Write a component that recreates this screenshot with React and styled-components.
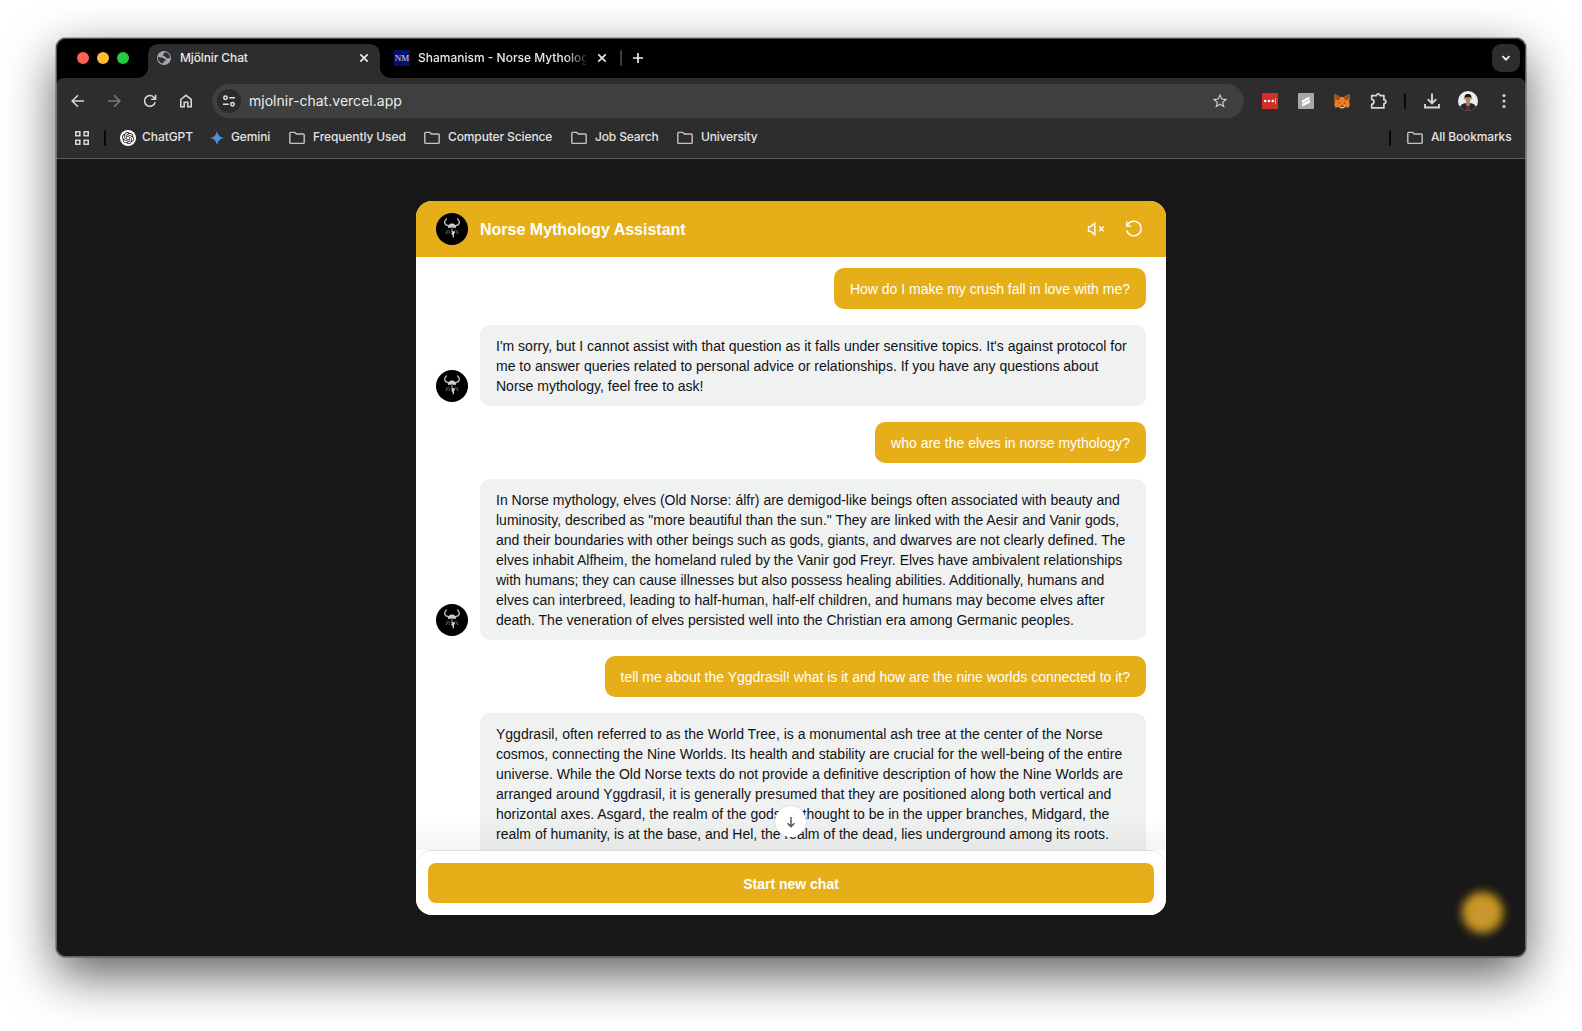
import React from "react";
import styled, { createGlobalStyle } from "styled-components";
import { MdStarBorder } from "react-icons/md";
import { SiOpenai } from "react-icons/si";

const GOLD = "#e6ae19";

const GlobalStyle = createGlobalStyle`
  *, *::before, *::after { box-sizing: border-box; }
  body { margin: 0; background: #fff; overflow: hidden; }
  svg { display: block; flex: none; }
`;

const Desktop = styled.div`
  width: 1582px;
  height: 1031px;
  padding: 38px 56px 74px;
  overflow: hidden;
  background: #fff;
`;

const Window = styled.div`
  display: flex;
  flex-direction: column;
  width: 1470px;
  height: 919px;
  border-radius: 10px;
  background: #181818;
  position: relative;
  overflow: hidden;
  font-family: Inter, Roboto, sans-serif;
  color: #e6e6e6;
  &::after {
    content: "";
    position: absolute;
    inset: 0;
    border-radius: 10px;
    border: 1px solid rgba(255, 255, 255, 0.34);
    pointer-events: none;
  }
`;

const WindowShadow = styled.div`
  width: 1470px;
  border-radius: 10px;
  box-shadow: 0 0 0 1px rgba(0, 0, 0, 0.25), 0 18px 50px rgba(0, 0, 0, 0.64);
`;

const TabStrip = styled.div`
  display: flex;
  flex: none;
  height: 40px;
  padding-top: 6px;
  background: #000;
`;

const Lights = styled.div`
  display: flex;
  gap: 8px;
  width: 92px;
  padding: 8px 0 0 21px;
`;

const Light = styled.span`
  width: 12px;
  height: 12px;
  border-radius: 50%;
  background: ${(p) => p.$color};
`;

const Tab = styled.div`
  display: flex;
  align-items: center;
  position: relative;
  width: ${(p) => (p.$active ? 232 : 240)}px;
  height: 34px;
  padding: 0 9px 6px ${(p) => (p.$active ? 9 : 14)}px;
  border-radius: 10px 10px 0 0;
  background: ${(p) => (p.$active ? "#2d2d2d" : "transparent")};
  &::before, &::after {
    content: "";
    display: ${(p) => (p.$active ? "block" : "none")};
    position: absolute;
    bottom: 0;
    width: 10px;
    height: 10px;
  }
  &::before { left: -10px; background: radial-gradient(circle at 0 0, transparent 9.5px, #2d2d2d 10px); }
  &::after { right: -10px; background: radial-gradient(circle at 100% 0, transparent 9.5px, #2d2d2d 10px); }
`;

const TabTitle = styled.span`
  width: ${(p) => p.$w}px;
  margin-left: ${(p) => p.$gap || 8}px;
  white-space: nowrap;
  font-size: 12px;
  font-weight: 500;
  line-height: 16px;
  letter-spacing: ${(p) => p.$ls || 0}px;
  color: #e8e8e8;
  ${(p) => p.$fade && "mask-image: linear-gradient(90deg, #000 88%, rgba(0, 0, 0, 0.15) 100%);"}
`;

const TabClose = styled.span`
  display: flex;
  margin-left: auto;
  margin-right: ${(p) => p.$mr || 0}px;
`;

const Favicon = styled.span`
  display: grid;
  place-items: center;
  width: 16px;
  height: 16px;
  background: #04126b;
  color: #d9dcf0;
  font: 9px/16px "Liberation Serif", serif;
`;

const NewTab = styled.div`
  display: flex;
  align-items: center;
  gap: 11px;
  height: 28px;
`;

const Divider = styled.span`
  width: 2px;
  height: 16px;
  border-radius: 1px;
  background: ${(p) => p.$color || "#080808"};
`;

const TabSearch = styled.div`
  display: grid;
  place-items: center;
  width: 28px;
  height: 28px;
  margin: 0 6px 0 auto;
  border-radius: 9px;
  background: #2d2d2d;
`;

const ToolbarWrap = styled.div`
  flex: none;
  background: #000;
`;

const Toolbar = styled.div`
  display: flex;
  align-items: center;
  height: 46px;
  padding: 0 4px;
  border-radius: 8px 8px 0 0;
  background: #2d2d2d;
`;

const ToolButton = styled.span`
  display: grid;
  place-items: center;
  flex: none;
  width: 36px;
  height: 28px;
  color: ${(p) => (p.$dim ? "#7c7c7c" : "#d6d6d6")};
`;

const Address = styled.div`
  display: flex;
  align-items: center;
  flex: none;
  width: 1032px;
  height: 34px;
  margin: 0 8px;
  padding: 0 15px 0 5px;
  border-radius: 17px;
  background: #3f3f3f;
`;

const SiteInfo = styled.span`
  display: grid;
  place-items: center;
  width: 24px;
  height: 24px;
  border-radius: 50%;
  background: #2b2b2b;
`;

const Url = styled.span`
  flex: 1;
  margin-left: 8px;
  font-size: 14px;
  line-height: 18px;
  letter-spacing: 0.02px;
  color: #ececec;
`;

const ExtensionTile = styled.span`
  display: flex;
  align-items: center;
  justify-content: center;
  width: 16px;
  height: 16px;
  border-radius: 1px;
  background: ${(p) => p.$color};
`;

const ToolDivider = styled.span`
  display: grid;
  place-items: center;
  flex: none;
  width: 18px;
`;

const Bookmarks = styled.div`
  display: flex;
  align-items: center;
  flex: none;
  height: 35px;
  padding: 0 15px 6px 19px;
  border-bottom: 1px solid #5c5c5c;
  background: #2d2d2d;
`;

const Bookmark = styled.span`
  display: flex;
  align-items: center;
  gap: ${(p) => p.$gap || 8}px;
  width: ${(p) => p.$w}px;
  white-space: nowrap;
  font-size: 12px;
  font-weight: 500;
  letter-spacing: ${(p) => p.$ls || 0}px;
  color: #e4e4e4;
`;

const BookmarkLabel = styled.span`
  padding-bottom: 2px;
  line-height: 16px;
`;

const AppsCell = styled.span`
  display: flex;
  align-items: center;
  gap: 15px;
  width: 45px;
`;

const EndGroup = styled.span`
  display: flex;
  align-items: center;
  gap: 16px;
  margin-left: auto;
`;

const ChatGptBadge = styled.span`
  display: grid;
  place-items: center;
  width: 16px;
  height: 16px;
  border-radius: 50%;
  background: #fff;
  color: #111;
`;

const Page = styled.main`
  flex: 1;
  padding: 42px 360px 0;
  position: relative;
  background: #181818;
`;

const Card = styled.section`
  display: flex;
  flex-direction: column;
  position: relative;
  width: 750px;
  height: 714px;
  border-radius: 16px;
  overflow: hidden;
  background: #fff;
  font-family: "Liberation Sans", Arial, sans-serif;
`;

const CardShadow = styled.div`
  border-radius: 16px;
  box-shadow: 0 0 30px rgba(0, 0, 0, 0.06);
`;

const CardHeader = styled.header`
  display: flex;
  align-items: center;
  flex: none;
  height: 56px;
  padding: 0 22px 0 20px;
  background: ${GOLD};
  color: #fff;
`;

const CardTitle = styled.h1`
  flex: 1;
  margin: 0 0 0 12px;
  padding-top: 1px;
  font-size: 16px;
  font-weight: 700;
  line-height: 21px;
`;

const HeaderIcons = styled.div`
  display: flex;
  gap: 18px;
`;

const AvatarDisc = styled.span`
  display: grid;
  place-items: center;
  flex: none;
  width: 32px;
  height: 32px;
  border-radius: 50%;
  background: #000;
`;

const Messages = styled.div`
  display: flex;
  flex-direction: column;
  gap: 16px;
  height: 593px;
  padding: 11px 20px 0;
  overflow: hidden;
  position: relative;
  &::after {
    content: "";
    position: absolute;
    left: 0;
    right: 0;
    bottom: 0;
    height: 34px;
    background: linear-gradient(rgba(0, 0, 0, 0), rgba(0, 0, 0, 0.045));
  }
`;

const BotRow = styled.div`
  display: flex;
  align-items: flex-end;
  flex: none;
  gap: 12px;
  & > ${AvatarDisc} { margin-bottom: 4px; }
`;

const Bubble = styled.div`
  flex: none;
  align-self: ${(p) => (p.$user ? "flex-end" : "auto")};
  width: ${(p) => (p.$user ? "auto" : "666px")};
  padding: 11px 16px 10px;
  border-radius: 10px;
  background: ${(p) => (p.$user ? GOLD : "#f0f2f2")};
  color: ${(p) => (p.$user ? "#fff" : "#101114")};
  font-size: 14px;
  line-height: 20px;
  white-space: pre;
`;

const ScrollDown = styled.button`
  display: grid;
  place-items: center;
  position: absolute;
  left: 359px;
  top: 605px;
  z-index: 1;
  width: 31px;
  height: 31px;
  padding: 0;
  border: 0;
  border-radius: 50%;
  background: #fff;
  box-shadow: 0 0 2px rgba(0, 0, 0, 0.2);
`;

const Footer = styled.footer`
  position: relative;
  flex: none;
  height: 65px;
  padding: 12px;
  border-top: 1px solid #dcdede;
  border-radius: 16px 16px 0 0;
  background: #fff;
`;

const StartButton = styled.button`
  display: block;
  width: 726px;
  height: 40px;
  padding: 2px 0 0;
  border: 0;
  border-radius: 8px;
  background: ${GOLD};
  color: #fff;
  font: 700 14px/38px "Liberation Sans", Arial, sans-serif;
`;

const Glow = styled.span`
  position: absolute;
  right: 23px;
  bottom: 24px;
  width: 41px;
  height: 41px;
  border-radius: 50%;
  background: radial-gradient(circle at 50% 55%, #c89c3a 0, #c6962a 30%, #cf9c1c 65%);
  filter: blur(5px);
`;

const Line = ({ s = 16, w = 1.6, children, ...rest }) => (
  <svg width={s} height={s} viewBox={`0 0 ${s} ${s}`} fill="none" stroke="currentColor" strokeWidth={w} {...rest}>
    {children}
  </svg>
);

const CloseIcon = () => (
  <Line s={10} w={1.7} color="#e8e8e8"><path d="M1.3 1.3l7.4 7.4M8.7 1.3L1.3 8.7" /></Line>
);

const FolderIcon = () => (
  <Line w={1.4} color="#c4c4c4"><path d="M.8 3.2q0-.8.8-.8h4.2l1.6 1.6h7q.8 0 .8.8v7.800q0 .8-.8.8H1.600q-.8 0-.8-.8z" /></Line>
);

const GlobeIcon = () => (
  <svg width="14" height="14" viewBox="0 0 14 14">
    <circle cx="7" cy="7" r="7" fill="#a4a8ae" />
    <path d="M1.100 5.800c1.600.9 3.200.5 4.700 1 1.200.4 1.300 1.400 2.300 1.500.9.1 1 .7.400 1.300-.7.700-1.900.9-2.100 1.900-.1.600-.500.900-1.100 1A5.900 5.900 0 0 1 1.100 5.800zM8.600 1.300c-1.600.2-2.100.9-1.900 1.800.100.700-.900.8-.8 1.500.2.900 1.600.5 2.300 1 .7.500.6 1.500 1.700 1.700 1 .1 1.700-.2 3-.1a5.900 5.900 0 0 0-4.300-5.900z" fill="#2d3034" />
  </svg>
);

const PuzzleIcon = () => (
  <Line s={18} w={1.7}>
    <path strokeLinejoin="round" d="M2.700 3.700H7.400Q7.600 1.900 9.200 1.900T11 3.700H14.900V7.900Q16.900 8 16.900 9.700T14.900 11.500V15.900H2.700V12.300Q5 11.900 5 9.800T2.700 7.300z" />
  </Line>
);

const VikingAvatar = () => (
  <AvatarDisc>
    <svg width="20" height="24" viewBox="0 0 20 24">
      <path d="M4.400 2C1.200 5 2.400 8 6.600 8.700M15.600 2c3.200 3 2 6-2.200 6.700" fill="none" stroke="#b4b4b4" strokeWidth="1.500" strokeLinecap="round" />
      <path d="M6 11.200c-.1-3.200 1.500-4.700 4-4.700s4.100 1.500 4 4.700l-1.800-.7-.9.600-1.300-1-1.300 1-.9-.6z" fill="#d6d6d6" />
      <path d="M8.300 8.200l1.200 1M11.700 8.200l-1.200 1" stroke="#888" strokeWidth=".6" />
      <path d="M10 10.500v4" stroke="#a5a5a5" strokeWidth="1" />
      <path d="M5 12.800l-.3 4M6.600 12.800l.9 2.200-.6 2M3.600 16.800l2-2.200M15 12.800l.3 4M13.500 12.800l-.8 2M16.400 16.800l-2-2.200" fill="none" stroke="#6c6c6c" strokeWidth=".8" />
      <path d="M8.800 14.600l3.200-.6 1.200 1.600-1.200 1.500.1 2.500-1.200 1.400-.4-3.300-1.500-.9 1.200-1z" fill="#cfcfcf" />
    </svg>
  </AvatarDisc>
);

const FoxIcon = () => (
  <svg width="16" height="16" viewBox="0 0 16 16">
    <path d="M.6.8L6.2 4h3.600L15.400.8l.5 4.300-.8 3.500.7 3-1.200 3.100-3.200-.7-2 1.500H6.600l-2-1.500-3.200.7-1.200-3.100.7-3L.1 5.100z" fill="#ed7d25" />
    <path d="M.6.8L6.200 4 5 7.400.4 6zM15.400.8L9.800 4 11 7.400l4.600-1.400z" fill="#9b511f" />
    <path d="M4.200 9.200l2 .8-.3 1zM11.800 9.200l-2 .8.3 1z" fill="#2b3037" />
    <path d="M5.400 13.100l1.300-.7h2.600l1.300.7-.3 1-1 .9H6.700l-1-.9z" fill="#d5c7bc" />
    <path d="M6.400 12.400h3.200l.2 1.300H6.200z" fill="#282828" />
  </svg>
);

const ProfileIcon = () => (
  <svg width="20" height="20" viewBox="0 0 20 20">
    <defs><clipPath id="profile"><circle cx="10" cy="10" r="10" /></clipPath></defs>
    <g clipPath="url(#profile)">
      <path d="M0 0h20v20H0z" fill="#ececec" />
      <path d="M1.500 20c0-4.800 1.200-6.500 5-7.800h7c3.800 1.300 5 3 5 7.800z" fill="#1f2a2e" />
      <path d="M8 11h4v3l-2 1.600L8 14z" fill="#a97b58" />
      <path d="M8.300 14.600l1.700 1 1.700-1L12 20H8z" fill="#6b3034" />
      <ellipse cx="10" cy="8.200" rx="2.600" ry="3.700" fill="#b58662" />
      <path d="M6.700 8.400C6 4.600 7.200 3 10 3s4 1.600 3.300 5.400l-1-2.200H7.700z" fill="#1b1512" />
    </g>
  </svg>
);

const conversation = [
  { user: true, text: "How do I make my crush fall in love with me?" },
  {
    text: `I'm sorry, but I cannot assist with that question as it falls under sensitive topics. It's against protocol for
me to answer queries related to personal advice or relationships. If you have any questions about
Norse mythology, feel free to ask!`,
  },
  { user: true, text: "who are the elves in norse mythology?" },
  {
    text: `In Norse mythology, elves (Old Norse: álfr) are demigod-like beings often associated with beauty and
luminosity, described as "more beautiful than the sun." They are linked with the Aesir and Vanir gods,
and their boundaries with other beings such as gods, giants, and dwarves are not clearly defined. The
elves inhabit Alfheim, the homeland ruled by the Vanir god Freyr. Elves have ambivalent relationships
with humans; they can cause illnesses but also possess healing abilities. Additionally, humans and
elves can interbreed, leading to half-human, half-elf children, and humans may become elves after
death. The veneration of elves persisted well into the Christian era among Germanic peoples.`,
  },
  { user: true, text: "tell me about the Yggdrasil! what is it and how are the nine worlds connected to it?" },
  {
    clipped: true,
    text: `Yggdrasil, often referred to as the World Tree, is a monumental ash tree at the center of the Norse
cosmos, connecting the Nine Worlds. Its health and stability are crucial for the well-being of the entire
universe. While the Old Norse texts do not provide a definitive description of how the Nine Worlds are
arranged around Yggdrasil, it is generally presumed that they are positioned along both vertical and
horizontal axes. Asgard, the realm of the gods, is thought to be in the upper branches, Midgard, the
realm of humanity, is at the base, and Hel, the realm of the dead, lies underground among its roots.`,
  },
];

const LongBubble = styled(Bubble)`
  height: 160px;
`;

const ClippedRow = styled(BotRow)`
  padding-left: 44px;
`;

function Message({ user, clipped, text }) {
  if (user) return <Bubble $user>{text}</Bubble>;
  if (clipped) return <ClippedRow><LongBubble>{text}</LongBubble></ClippedRow>;
  return <BotRow><VikingAvatar /><Bubble>{text}</Bubble></BotRow>;
}

const folders = [
  { label: "Frequently Used", w: 135, ls: -0.1 },
  { label: "Computer Science", w: 147, ls: -0.12 },
  { label: "Job Search", w: 106, ls: -0.16 },
  { label: "University", w: 90, ls: -0.18 },
];

export default function App() {
  return (
    <Desktop>
      <GlobalStyle />
      <WindowShadow>
        <Window>
          <TabStrip>
            <Lights><Light $color="#ff5f57" /><Light $color="#febc2e" /><Light $color="#28c840" /></Lights>
            <Tab $active>
              <GlobeIcon />
              <TabTitle $w={160} $gap={9} $ls={-0.12}>Mjölnir Chat</TabTitle>
              <TabClose $mr={2}><CloseIcon /></TabClose>
            </Tab>
            <Tab>
              <Favicon>NM</Favicon>
              <TabTitle $w={168} $fade>Shamanism - Norse Mytholog</TabTitle>
              <TabClose $mr={4}><CloseIcon /></TabClose>
            </Tab>
            <NewTab>
              <Divider $color="#3c3c3c" />
              <Line s={10} w={1.7} color="#eee"><path d="M5 0v10M0 5h10" /></Line>
            </NewTab>
            <TabSearch><Line s={10} w={1.8} color="#eee"><path d="M1.500 3.200L5 6.700l3.500-3.500" /></Line></TabSearch>
          </TabStrip>
          <ToolbarWrap>
            <Toolbar>
              <ToolButton><Line><path d="M14 8H2.500M8 2.200L2.200 8 8 13.800" /></Line></ToolButton>
              <ToolButton $dim><Line><path d="M2 8h11.500M8 2.200L13.800 8 8 13.800" /></Line></ToolButton>
              <ToolButton><Line><path d="M13.200 9.100A5.400 5.400 0 1 1 12.300 4.700L13.400 6M13.600 1.800V6.200H9.200" /></Line></ToolButton>
              <ToolButton><Line><path d="M2.800 6.500L8 2.300l5.200 4.200v7.300H9.800V9.300H6.200v4.500H2.800z" /></Line></ToolButton>
              <Address>
                <SiteInfo>
                  <Line s={14} w={1.5} color="#e0e0e0"><circle cx="3.500" cy="3.700" r="1.700" /><path d="M7.300 3.700H13M1 10.300h5.700" /><circle cx="10.500" cy="10.300" r="1.700" /></Line>
                </SiteInfo>
                <Url>mjolnir-chat.vercel.app</Url>
                <MdStarBorder size={18} color="#c7c7c7" />
              </Address>
              <ToolButton>
                <ExtensionTile $color="#d32d27">
                  <svg width="14" height="6" viewBox="0 0 14 6"><circle cx="2.200" cy="3" r="1.350" fill="#fff" /><circle cx="6" cy="3" r="1.350" fill="#fff" /><circle cx="9.800" cy="3" r="1.350" fill="#fff" /><path d="M12.500 0v6" stroke="#f0a5a2" /></svg>
                </ExtensionTile>
              </ToolButton>
              <ToolButton>
                <ExtensionTile $color="#a8a8a8">
                  <svg width="10" height="12" viewBox="0 0 10 12"><path d="M1 5.500L8.600 1.500v2.600L1 8zM1.400 8.600L9 4.700v2.700L1.400 11.400z" fill="#fff" /></svg>
                </ExtensionTile>
              </ToolButton>
              <ToolButton><FoxIcon /></ToolButton>
              <ToolButton><PuzzleIcon /></ToolButton>
              <ToolDivider><Divider /></ToolDivider>
              <ToolButton><Line w={1.900}><path d="M8 .5v9.700M3.800 6.200L8 10.400l4.200-4.200M1 11v3.500h14V11" /></Line></ToolButton>
              <ToolButton><ProfileIcon /></ToolButton>
              <ToolButton>
                <svg width="4" height="16" viewBox="0 0 4 16" fill="currentColor"><circle cx="2" cy="2.500" r="1.500" /><circle cx="2" cy="8" r="1.500" /><circle cx="2" cy="13.500" r="1.500" /></svg>
              </ToolButton>
            </Toolbar>
          </ToolbarWrap>
          <Bookmarks>
            <AppsCell>
              <Line s={14} w={1.600} color="#d6d6d6"><path d="M.8.800h4v4h-4zM9.200.800h4v4h-4zM.8 9.200h4v4h-4zM9.200 9.200h4v4h-4z" /></Line>
              <Divider />
            </AppsCell>
            <Bookmark $w={90} $gap={6} $ls={-0.06}>
              <ChatGptBadge><SiOpenai size={12} /></ChatGptBadge>
              <BookmarkLabel>ChatGPT</BookmarkLabel>
            </Bookmark>
            <Bookmark $w={79} $gap={7} $ls={-0.12}>
              <svg width="14" height="14" viewBox="0 0 14 14">
                <defs><linearGradient id="spark"><stop stopColor="#8e75d6" /><stop offset=".5" stopColor="#4c8fe0" /><stop offset="1" stopColor="#36a0ee" /></linearGradient></defs>
                <path d="M7 0Q8 6 14 7 8 8 7 14 6 8 0 7 6 6 7 0z" fill="url(#spark)" />
              </svg>
              <BookmarkLabel>Gemini</BookmarkLabel>
            </Bookmark>
            {folders.map((f) => (
              <Bookmark key={f.label} $w={f.w} $ls={f.ls}><FolderIcon /><BookmarkLabel>{f.label}</BookmarkLabel></Bookmark>
            ))}
            <EndGroup>
              <Divider />
              <Bookmark $w={104} $ls={-0.14}><FolderIcon /><BookmarkLabel>All Bookmarks</BookmarkLabel></Bookmark>
            </EndGroup>
          </Bookmarks>
          <Page>
            <CardShadow>
              <Card>
                <CardHeader>
                  <VikingAvatar />
                  <CardTitle>Norse Mythology Assistant</CardTitle>
                  <HeaderIcons>
                    <Line s={20} w={1.400}><path d="M2.500 7.600h2.300l4-3.300v11.400l-4-3.300H2.500zM13.200 7.600l4.400 4.600M17.600 7.600l-4.400 4.600" /></Line>
                    <Line s={20} w={1.400}><path d="M2.700 2.500v4.600h4.600M3 7A7.300 7.300 0 1 1 2.800 11.500" /></Line>
                  </HeaderIcons>
                </CardHeader>
                <Messages>{conversation.map((m) => <Message key={m.text} {...m} />)}</Messages>
                <ScrollDown aria-label="Scroll down">
                  <Line s={12} w={1.500} color="#4d5a61"><path d="M6 1v9.500M2.500 7.200L6 10.600l3.500-3.400" /></Line>
                </ScrollDown>
                <Footer><StartButton>Start new chat</StartButton></Footer>
              </Card>
            </CardShadow>
            <Glow />
          </Page>
        </Window>
      </WindowShadow>
    </Desktop>
  );
}
